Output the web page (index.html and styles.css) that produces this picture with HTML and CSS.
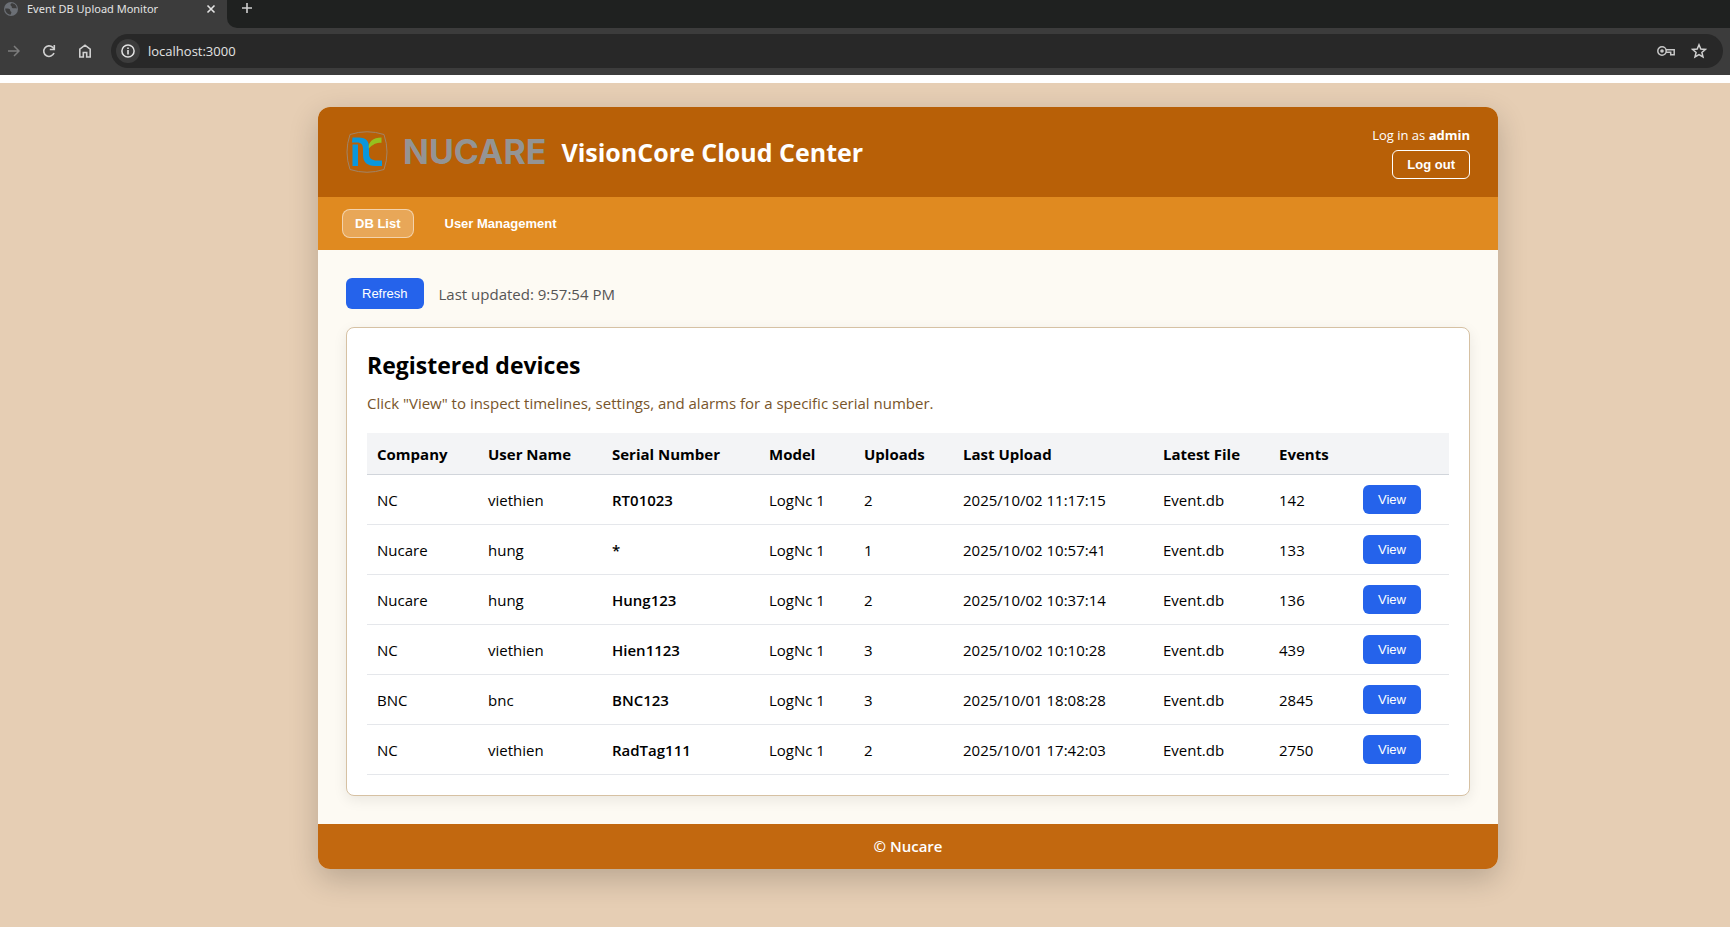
FILE: index.html
```html
<!DOCTYPE html>
<html lang="en">
<head>
<meta charset="utf-8">
<title>Event DB Upload Monitor</title>
<link rel="stylesheet" href="styles.css">
</head>
<body>
<div class="browser">
  <div class="tabstrip">
    <div class="tab">
      <svg class="tab-icon" width="14" height="14" viewBox="0 0 14 14" aria-hidden="true"><circle cx="7" cy="7" r="7" fill="#6b6f75"/><path d="M1.200 6.500c2 .2 3.600-.2 4.600.8 1 .9-.2 1.800 1 2.300 1 .4.700 1.700-.3 3.100C3.500 12.500 1 9.800 1.200 6.500zM7.500 1.300c-1 .9-1.600 1.900-.4 2.400 1 .4.200 1.700 1.200 2.300 1.300.7 2.600-.3 4.500.6C12.800 3.500 10.500 1.300 7.500 1.300z" fill="#3c3c3c"/></svg>
      <span class="tab-title">Event DB Upload Monitor</span>
      <button class="chrome-button" type="button" aria-label="Close tab"><svg width="10" height="10" viewBox="0 0 10 10"><path d="M1.500 1.500l7 7M8.500 1.500l-7 7" stroke="#e3e3e3" stroke-width="1.600"/></svg></button>
    </div>
    <div class="strip-rest">
      <button class="chrome-button" type="button" aria-label="New tab"><svg width="12" height="12" viewBox="0 0 12 12"><path d="M6 1v10M1 6h10" stroke="#d0d0d0" stroke-width="1.600"/></svg></button>
    </div>
  </div>
  <div class="toolbar">
    <button class="chrome-button" type="button" aria-label="Forward"><svg width="12" height="12" viewBox="0 0 12 12"><path d="M0 6h11M6 1l5 5-5 5" fill="none" stroke="#7d7d7d" stroke-width="1.500"/></svg></button>
    <button class="chrome-button" type="button" aria-label="Reload"><svg width="14" height="14" viewBox="0 0 14 14"><path d="M12 9A5.300 5.300 0 1 1 10.800 3.400L12 4.700" fill="none" stroke="#d0d0d0" stroke-width="1.600"/><path d="M12.300 1v4.500H7.800" fill="none" stroke="#d0d0d0" stroke-width="1.600"/></svg></button>
    <button class="chrome-button" type="button" aria-label="Home"><svg width="14" height="14" viewBox="0 0 14 14"><path d="M1.800 13V5.200L7 1.200l5.200 4V13H8.700V8.500H5.300V13z" fill="none" stroke="#d0d0d0" stroke-width="1.600"/></svg></button>
    <div class="address">
      <button class="site-info" type="button" aria-label="Site information"><svg width="14" height="14" viewBox="0 0 14 14"><circle cx="7" cy="7" r="6.100" fill="none" stroke="#e3e3e3" stroke-width="1.500"/><path d="M7 6v4.400M7 3.500v1.600" stroke="#e3e3e3" stroke-width="1.600"/></svg></button>
      <input class="url" type="text" value="localhost:3000" aria-label="Address">
      <button class="chrome-button" type="button" aria-label="Passwords"><svg width="18" height="10" viewBox="0 0 18 10"><circle cx="5" cy="5" r="4.200" fill="none" stroke="#c7c7c7" stroke-width="1.500"/><circle cx="5" cy="5" r="1.800" fill="#c7c7c7"/><path d="M9 3.800h8.200v5h-3.500V6.300H9" fill="none" stroke="#c7c7c7" stroke-width="1.500"/></svg></button>
      <button class="chrome-button" type="button" aria-label="Bookmark"><svg width="16" height="16" viewBox="0 0 16 16"><path d="M8 1.800l1.800 4.200 4.600.4-3.500 3 1.100 4.500L8 11.500l-4 2.400 1.100-4.500-3.500-3 4.600-.4z" fill="none" stroke="#d0d0d0" stroke-width="1.500"/></svg></button>
    </div>
  </div>
</div>
<main class="page">
  <div class="shell">
    <header class="header">
      <div class="brand">
        <svg class="logo" width="42" height="42" viewBox="0 0 42 42" aria-hidden="true"><path d="M4 3.500Q21-2 38 3.500Q44 21 38 38.500Q21 44 4 38.500Q-2 21 4 3.500z" fill="none" stroke="#a08468"/><path d="M6.500 13.500h5.500V35H6.500z" fill="#0a97dc"/><path d="M6.500 6.500h6c8 0 10.500 4 10.500 10v6c0 5 3 7 8 7h5V35h-7c-8 0-12-4-12-11v-6c0-4-1.500-6.500-6-6.500h-5z" fill="#0a97dc"/><path d="M22.800 17.500c-.8-6.500 4.200-11 12.700-11v5.300c-6 0-8.500 1.700-12.700 5.700z" fill="#95c11f"/></svg>
        <span class="wordmark">NUCARE</span>
        <h1 class="title">VisionCore Cloud Center</h1>
      </div>
      <div class="account">
        <span>Log in as <strong>admin</strong></span>
        <button class="logout" type="button">Log out</button>
      </div>
    </header>
    <nav class="nav">
      <button class="nav-item active" type="button">DB List</button>
      <button class="nav-item" type="button">User Management</button>
    </nav>
    <div class="content">
      <div class="actions">
        <button class="primary refresh" type="button">Refresh</button>
        <span class="updated">Last updated: 9:57:54 PM</span>
      </div>
      <section class="card">
        <h2 class="card-title">Registered devices</h2>
        <p class="hint">Click "View" to inspect timelines, settings, and alarms for a specific serial number.</p>
        <table class="devices">
          <colgroup><col class="c-company"><col class="c-user"><col class="c-serial"><col class="c-model"><col class="c-uploads"><col class="c-last"><col class="c-file"><col class="c-events"><col class="c-action"></colgroup>
          <thead><tr><th>Company</th><th>User Name</th><th>Serial Number</th><th>Model</th><th>Uploads</th><th>Last Upload</th><th>Latest File</th><th>Events</th><th></th></tr></thead>
          <tbody>
            <tr><td>NC</td><td>viethien</td><td class="serial">RT01023</td><td>LogNc 1</td><td>2</td><td>2025/10/02 11:17:15</td><td>Event.db</td><td>142</td><td><button class="primary view" type="button">View</button></td></tr>
            <tr><td>Nucare</td><td>hung</td><td class="serial">*</td><td>LogNc 1</td><td>1</td><td>2025/10/02 10:57:41</td><td>Event.db</td><td>133</td><td><button class="primary view" type="button">View</button></td></tr>
            <tr><td>Nucare</td><td>hung</td><td class="serial">Hung123</td><td>LogNc 1</td><td>2</td><td>2025/10/02 10:37:14</td><td>Event.db</td><td>136</td><td><button class="primary view" type="button">View</button></td></tr>
            <tr><td>NC</td><td>viethien</td><td class="serial">Hien1123</td><td>LogNc 1</td><td>3</td><td>2025/10/02 10:10:28</td><td>Event.db</td><td>439</td><td><button class="primary view" type="button">View</button></td></tr>
            <tr><td>BNC</td><td>bnc</td><td class="serial">BNC123</td><td>LogNc 1</td><td>3</td><td>2025/10/01 18:08:28</td><td>Event.db</td><td>2845</td><td><button class="primary view" type="button">View</button></td></tr>
            <tr><td>NC</td><td>viethien</td><td class="serial">RadTag111</td><td>LogNc 1</td><td>2</td><td>2025/10/01 17:42:03</td><td>Event.db</td><td>2750</td><td><button class="primary view" type="button">View</button></td></tr>
          </tbody>
        </table>
      </section>
    </div>
    <footer class="footer">© Nucare</footer>
  </div>
</main>
</body>
</html>
```
FILE: styles.css
```css
* { box-sizing: border-box; }
body {
  margin: 0;
  min-height: 100vh;
  display: flex;
  flex-direction: column;
  background: #fff;
  color: #000;
  font: 15px/22px "Open Sans", "Noto Sans", sans-serif;
}
button { font-family: "Liberation Sans", Arial, sans-serif; cursor: pointer; }

.browser { background: #3c3c3c; margin-bottom: 8px; }
.tabstrip { display: flex; height: 28px; background: #3c3c3c; }
.tab {
  display: flex;
  align-items: center;
  gap: 9px;
  width: 227px;
  padding: 0 11px 11px 4px;
  color: #e3e3e3;
  font: 11px/16px "Noto Sans", sans-serif;
}
.tab-title { flex: 1; white-space: nowrap; }
.strip-rest {
  flex: 1;
  padding: 2px 14px;
  background: #1f2120;
  border-bottom-left-radius: 10px;
}
.chrome-button {
  display: flex;
  padding: 0;
  border: 0;
  background: none;
}
.toolbar {
  display: flex;
  align-items: center;
  gap: 22px;
  padding: 6px 7px 7px 8px;
}
.address {
  display: flex;
  flex: 1;
  align-items: center;
  gap: 16px;
  height: 34px;
  margin-left: -3px;
  padding: 0 16px 0 5px;
  border-radius: 17px;
  background: #282828;
}
.site-info {
  display: flex;
  align-items: center;
  justify-content: center;
  width: 24px;
  height: 24px;
  padding: 0;
  border: 0;
  border-radius: 50%;
  background: #3c3c3c;
}
.url {
  flex: 1;
  margin-left: -8px;
  padding: 0;
  border: 0;
  background: none;
  color: #e3e3e3;
  font: 13px/20px "Open Sans", "Noto Sans", sans-serif;
}

.page { flex: 1; padding: 24px 24px 24px 110px; background: #e6ceb4; }
.shell {
  max-width: 1180px;
  margin: 0 auto;
  overflow: hidden;
  border-radius: 12px;
  background: #fdfaf3;
  box-shadow: 0 10px 30px rgba(0, 0, 0, 0.2);
}
.header {
  display: flex;
  align-items: center;
  justify-content: space-between;
  height: 90px;
  padding: 0 28px;
  background: #b86007;
  color: #fff;
}
.brand { display: flex; align-items: center; gap: 15px; }
.wordmark {
  color: #949494;
  font: 700 34px/42px Inter, sans-serif;
}
.title { margin: 0; font-size: 25px; line-height: 32px; font-weight: 700; }
.account {
  display: flex;
  flex-direction: column;
  align-items: flex-end;
  gap: 5px;
  font-size: 13px;
  line-height: 20px;
}
.logout {
  height: 29px;
  padding: 0 14px;
  border: 1px solid #fff;
  border-radius: 6px;
  background: none;
  color: #fff;
  font-size: 13px;
  font-weight: 700;
}
.nav {
  display: flex;
  gap: 18px;
  padding: 12px 24px;
  background: #e08a20;
}
.nav-item {
  height: 29px;
  padding: 0 12px;
  border: 1px solid transparent;
  border-radius: 8px;
  background: none;
  color: #fff;
  font-size: 13px;
  font-weight: 700;
}
.nav-item.active {
  border-color: rgba(255, 255, 255, 0.5);
  background: rgba(255, 255, 255, 0.25);
}

.content { padding: 28px; }
.actions { display: flex; align-items: center; gap: 15px; margin-bottom: 18px; }
.primary {
  border: 0;
  border-radius: 6px;
  background: #2563eb;
  color: #fff;
  font-size: 13px;
}
.refresh { height: 31px; padding: 0 16px; }
.updated { color: #555; }
.card {
  padding: 20px;
  border: 1px solid #d6c1a3;
  border-radius: 8px;
  background: #fff;
  box-shadow: 0 4px 14px rgba(0, 0, 0, 0.08);
}
.card-title { margin: 0 0 10px; font-size: 23px; line-height: 34px; font-weight: 700; }
.hint { margin: 0 0 19px; color: #78552b; }
.devices { width: 100%; table-layout: fixed; border-collapse: separate; border-spacing: 0; }
.devices th,
.devices td { padding: 0 10px; text-align: left; white-space: nowrap; }
.devices th { height: 42px; border-bottom: 1px solid #d1d5db; background: #f3f4f6; font-weight: 700; }
.devices td { height: 50px; border-bottom: 1px solid #e5e7eb; }
.devices .serial { font-weight: 600; }
.view { display: block; height: 29px; padding: 0 15px; }
.c-company { width: 111px; }
.c-user { width: 124px; }
.c-serial { width: 157px; }
.c-model { width: 95px; }
.c-uploads { width: 99px; }
.c-last { width: 200px; }
.c-file { width: 116px; }
.c-events { width: 84px; }
.c-action { width: 96px; }

.footer {
  padding: 12px;
  background: #c2680f;
  color: #fff;
  font-weight: 600;
  line-height: 21px;
  text-align: center;
}
```
